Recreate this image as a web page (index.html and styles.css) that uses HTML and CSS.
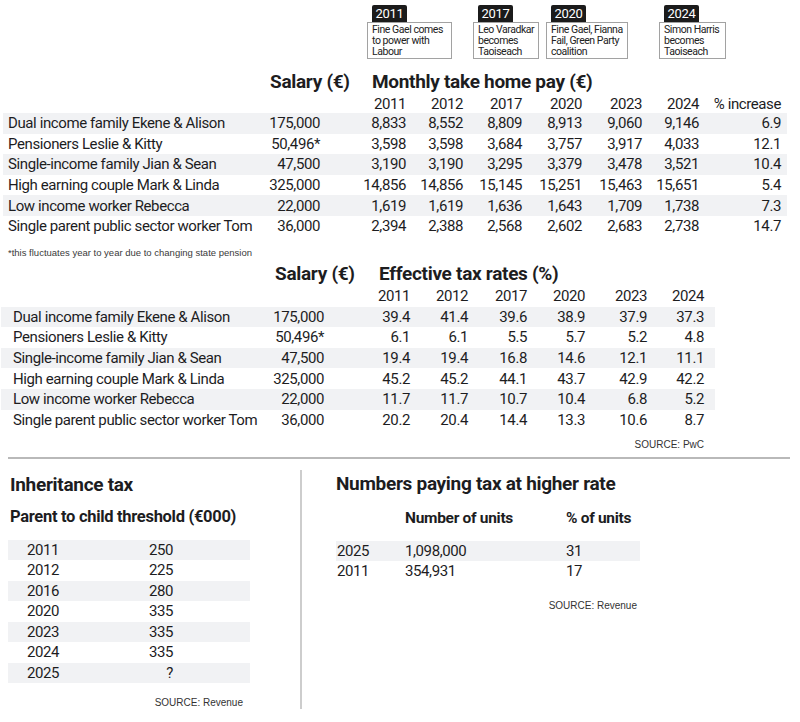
FILE: index.html
```html
<!DOCTYPE html>
<html lang="en">
<head>
<meta charset="utf-8">
<title>Take home pay and tax rates</title>
<link rel="stylesheet" href="styles.css">
</head>
<body>
<div class="page">
  <div class="events">
    <div class="event ev1"><span class="tag">2011</span><div class="note">Fine Gael comes<br>to power with<br>Labour</div></div>
    <div class="event ev2"><span class="tag">2017</span><div class="note">Leo Varadkar<br>becomes<br>Taoiseach</div></div>
    <div class="event ev3"><span class="tag">2020</span><div class="note">Fine Gael, Fianna<br>Fail, Green Party<br>coalition</div></div>
    <div class="event ev4"><span class="tag">2024</span><div class="note">Simon Harris<br>becomes<br>Taoiseach</div></div>
  </div>

  <section class="table t1">
    <div class="heads"><h2 class="h-sal">Salary (€)</h2><h2>Monthly take home pay (€)</h2></div>
    <div class="row yrs"><span></span><span></span><span>2011</span><span>2012</span><span>2017</span><span>2020</span><span>2023</span><span>2024</span><span>% increase</span></div>
    <div class="row s"><span>Dual income family Ekene &amp; Alison</span><span>175,000</span><span>8,833</span><span>8,552</span><span>8,809</span><span>8,913</span><span>9,060</span><span>9,146</span><span>6.9</span></div>
    <div class="row"><span>Pensioners Leslie &amp; Kitty</span><span>50,496*</span><span>3,598</span><span>3,598</span><span>3,684</span><span>3,757</span><span>3,917</span><span>4,033</span><span>12.1</span></div>
    <div class="row s"><span>Single-income family Jian &amp; Sean</span><span>47,500</span><span>3,190</span><span>3,190</span><span>3,295</span><span>3,379</span><span>3,478</span><span>3,521</span><span>10.4</span></div>
    <div class="row"><span>High earning couple Mark &amp; Linda</span><span>325,000</span><span>14,856</span><span>14,856</span><span>15,145</span><span>15,251</span><span>15,463</span><span>15,651</span><span>5.4</span></div>
    <div class="row s"><span>Low income worker Rebecca</span><span>22,000</span><span>1,619</span><span>1,619</span><span>1,636</span><span>1,643</span><span>1,709</span><span>1,738</span><span>7.3</span></div>
    <div class="row"><span>Single parent public sector worker Tom</span><span>36,000</span><span>2,394</span><span>2,388</span><span>2,568</span><span>2,602</span><span>2,683</span><span>2,738</span><span>14.7</span></div>
  </section>
  <p class="footnote">*this fluctuates year to year due to changing state pension</p>

  <section class="table t2">
    <div class="heads"><h2 class="h-sal">Salary (€)</h2><h2>Effective tax rates (%)</h2></div>
    <div class="row yrs"><span></span><span></span><span>2011</span><span>2012</span><span>2017</span><span>2020</span><span>2023</span><span>2024</span></div>
    <div class="row s"><span>Dual income family Ekene &amp; Alison</span><span>175,000</span><span>39.4</span><span>41.4</span><span>39.6</span><span>38.9</span><span>37.9</span><span>37.3</span></div>
    <div class="row"><span>Pensioners Leslie &amp; Kitty</span><span>50,496*</span><span>6.1</span><span>6.1</span><span>5.5</span><span>5.7</span><span>5.2</span><span>4.8</span></div>
    <div class="row s"><span>Single-income family Jian &amp; Sean</span><span>47,500</span><span>19.4</span><span>19.4</span><span>16.8</span><span>14.6</span><span>12.1</span><span>11.1</span></div>
    <div class="row"><span>High earning couple Mark &amp; Linda</span><span>325,000</span><span>45.2</span><span>45.2</span><span>44.1</span><span>43.7</span><span>42.9</span><span>42.2</span></div>
    <div class="row s"><span>Low income worker Rebecca</span><span>22,000</span><span>11.7</span><span>11.7</span><span>10.7</span><span>10.4</span><span>6.8</span><span>5.2</span></div>
    <div class="row"><span>Single parent public sector worker Tom</span><span>36,000</span><span>20.2</span><span>20.4</span><span>14.4</span><span>13.3</span><span>10.6</span><span>8.7</span></div>
  </section>
  <p class="source src-pwc">SOURCE: PwC</p>
  <div class="rule"></div>

  <div class="bottom">
    <div class="col-left">
      <h2 class="title">Inheritance tax</h2>
      <h3 class="subtitle">Parent to child threshold (€000)</h3>
      <div class="inh">
        <div class="irow s"><span>2011</span><span>250</span></div>
        <div class="irow"><span>2012</span><span>225</span></div>
        <div class="irow s"><span>2016</span><span>280</span></div>
        <div class="irow"><span>2020</span><span>335</span></div>
        <div class="irow s"><span>2023</span><span>335</span></div>
        <div class="irow"><span>2024</span><span>335</span></div>
        <div class="irow s"><span>2025</span><span>?</span></div>
      </div>
      <p class="source src-inh">SOURCE: Revenue</p>
    </div>
    <div class="divider"></div>
    <div class="col-right">
      <h2 class="title">Numbers paying tax at higher rate</h2>
      <div class="hrow hhead"><span></span><span>Number of units</span><span>% of units</span></div>
      <div class="hrows">
        <div class="hrow s"><span>2025</span><span>1,098,000</span><span>31</span></div>
        <div class="hrow"><span>2011</span><span>354,931</span><span>17</span></div>
      </div>
      <p class="source src-hi">SOURCE: Revenue</p>
    </div>
  </div>
</div>
</body>
</html>
```

FILE: styles.css
```css
* { box-sizing: border-box; }
html, body { margin: 0; padding: 0; background: #fff; }
body {
  font-family: Roboto, "Liberation Sans", sans-serif;
  color: #1d1d1f;
  width: 800px;
  height: 722px;
  overflow: hidden;
}
h2, h3, p { margin: 0; }

/* timeline callouts */
.events { display: flex; padding-top: 5px; height: 59px; }
.event { display: flex; flex-direction: column; }
.ev1 { margin-left: 367px; width: 85px; }
.ev2 { margin-left: 21px; width: 66px; }
.ev3 { margin-left: 7px; width: 82px; }
.ev4 { margin-left: 31px; width: 67px; }
.tag {
  align-self: flex-start;
  margin-left: 5px;
  width: 35px;
  height: 17px;
  line-height: 18px;
  background: #1b1b1b;
  color: #fff;
  font-size: 13px;
  letter-spacing: -0.3px;
  text-align: center;
  border-radius: 2px 2px 0 0;
}
.note {
  border: 1px solid #a2a2a2;
  height: 37px;
  padding: 1px 3px 0 4px;
  font-size: 10.5px;
  line-height: 11px;
  letter-spacing: -0.45px;
  color: #222;
  white-space: nowrap;
  overflow: hidden;
}

/* big tables */
.heads { display: flex; height: 24px; align-items: center; }
.heads h2 { font-size: 19px; font-weight: 700; letter-spacing: -0.3px; line-height: 24px; }
.t1 .heads { margin-top: 11px; padding-left: 270px; }
.t1 .h-sal { width: 102px; }
.t2 .heads { margin-top: 3px; padding-left: 275px; }
.t2 .h-sal { width: 104px; }

.row {
  display: grid;
  align-items: center;
  height: 20.6px;
  font-size: 15px;
  letter-spacing: -0.4px;
  white-space: nowrap;
}
.row span { text-align: right; }
.row span:first-child { text-align: left; }
.row.s { background: #f1f2f4; }

.t1 .row {
  margin-left: 3px;
  width: 784px;
  padding: 0 6px 0 5px;
  grid-template-columns: 252px 60px 86px 57px 59px 60px 60px 57px 82px;
}
.t1 .row.yrs { height: 19px; }

.t2 .row {
  margin-left: 1px;
  width: 714px;
  padding: 0 11px 0 12px;
  grid-template-columns: 251px 60px 86px 58px 59px 58px 62px 57px;
}
.t2 .row.yrs { height: 21px; }

.footnote {
  margin: 10px 0 0 8px;
  font-family: "Liberation Sans", Arial, sans-serif;
  font-size: 9.5px;
  line-height: 12px;
  color: #3a3a3a;
}

.source {
  font-family: "Liberation Sans", Arial, sans-serif;
  font-size: 10px;
  line-height: 12px;
  color: #333;
  text-align: right;
}
.src-pwc { margin-top: 8.4px; width: 704px; }

.rule { margin: 6px 10px 0 8px; height: 2px; background: #b9b9b9; }

/* bottom */
.bottom { display: flex; }
.col-left { width: 300px; padding-left: 8px; }
.divider { width: 2px; margin-top: 11px; height: 239px; background: #cdcdcd; }
.col-right { padding-left: 34px; }

.title { font-size: 19px; font-weight: 700; line-height: 24px; letter-spacing: -0.3px; margin-top: 13px; }
.col-left .title { padding-left: 2px; margin-top: 14px; }
.subtitle { font-size: 16.5px; font-weight: 700; line-height: 20px; letter-spacing: -0.3px; margin-top: 10px; padding-left: 2px; }

.inh { margin-top: 13px; width: 242px; }
.irow {
  display: grid;
  grid-template-columns: 100px 46px;
  align-items: center;
  height: 20.5px;
  padding-left: 19px;
  font-size: 15px;
  letter-spacing: -0.4px;
}
.irow span:last-child { text-align: right; }
.irow.s { background: #f1f2f4; }
.src-inh { margin-top: 13.5px; width: 235px; }

.hrow {
  display: grid;
  grid-template-columns: 69px 161px 1fr;
  align-items: center;
  width: 304px;
  height: 20.5px;
  font-size: 15px;
  letter-spacing: -0.4px;
}
.hrow span:first-child { padding-left: 1px; }
.hrow.s { background: #f1f2f4; }
.hhead { margin-top: 12px; height: 20px; font-weight: 700; font-size: 15.5px; letter-spacing: -0.3px; }
.hrows { margin-top: 13px; }
.src-hi { margin-top: 18px; width: 301px; }
```
